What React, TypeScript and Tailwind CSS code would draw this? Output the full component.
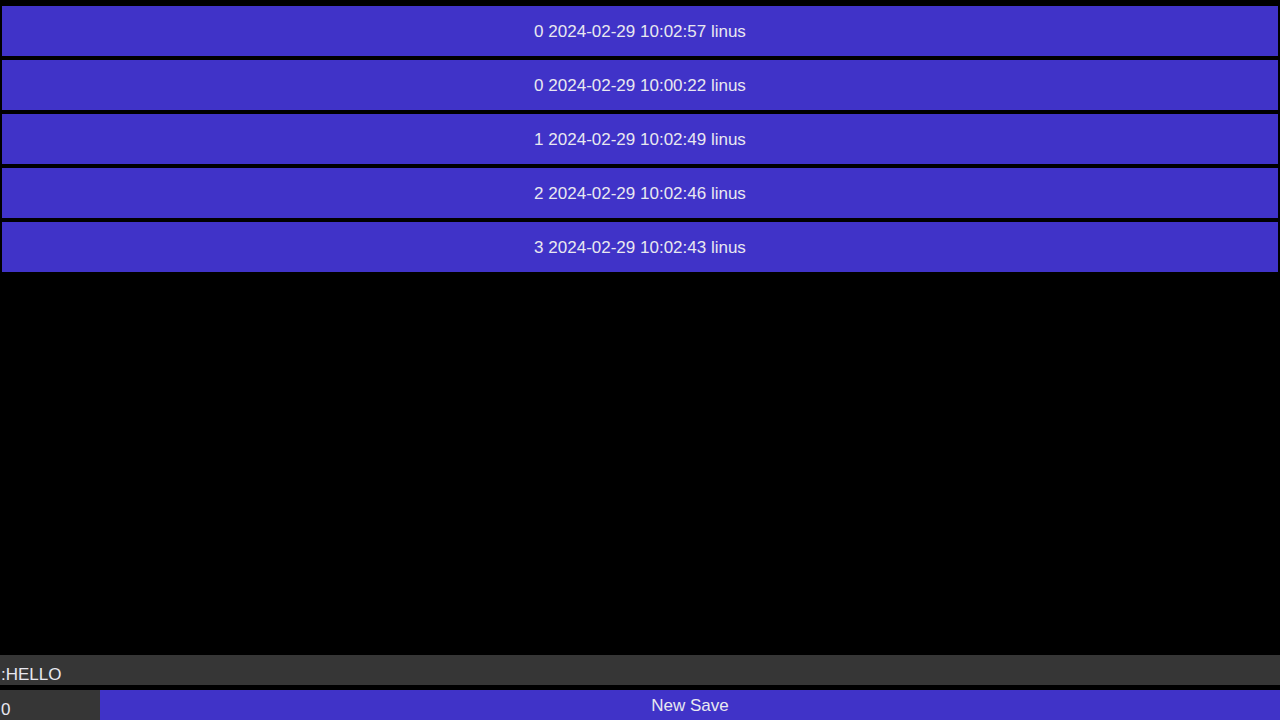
import React from 'react';

const saves = [
  { slot: 0, date: '2024-02-29 10:02:57', user: 'linus' },
  { slot: 0, date: '2024-02-29 10:00:22', user: 'linus' },
  { slot: 1, date: '2024-02-29 10:02:49', user: 'linus' },
  { slot: 2, date: '2024-02-29 10:02:46', user: 'linus' },
  { slot: 3, date: '2024-02-29 10:02:43', user: 'linus' },
];

export default function App() {
  return (
    <div
      className="h-screen w-full bg-black flex flex-col overflow-hidden text-[17px] text-[#e8e8f0]"
      style={{ fontFamily: '"Liberation Sans", Arial, sans-serif' }}
    >
      <div className="flex flex-col gap-[4px] pt-[6px] px-[2px]">
        {saves.map((s, i) => (
          <button
            key={i}
            className="h-[50px] w-full bg-[#4033c8] flex items-center justify-center pt-[2px]"
          >
            {s.slot} {s.date} {s.user}
          </button>
        ))}
      </div>

      <div className="flex-1" />

      <div className="h-[30px] bg-[#363636] flex items-end pl-[1px] leading-[20px]">
        :HELLO
      </div>

      <div className="h-[30px] mt-[5px] flex">
        <div className="w-[100px] bg-[#363636] pl-[1px] pt-[10px] leading-[20px]">0</div>
        <button className="flex-1 bg-[#4033c8] flex items-center justify-center leading-none pt-[1px]">
          New Save
        </button>
      </div>
    </div>
  );
}
